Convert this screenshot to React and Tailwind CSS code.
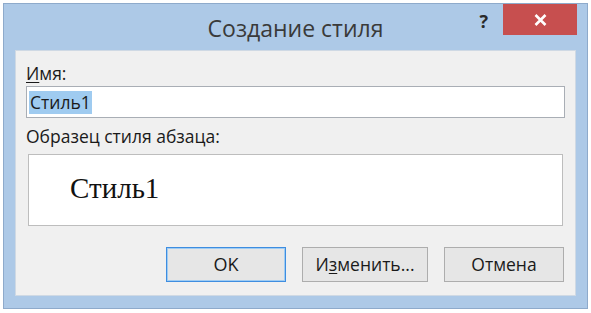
export default function App() {
  return (
    <div className="w-[591px] h-[313px] bg-white p-[3px] pb-[4px] font-['Open_Sans','Noto_Sans',sans-serif]">
      <div className="h-full flex flex-col bg-[#adc9e7] border border-[#8eaacb]">
        {/* Title bar */}
        <div className="h-[46px] flex items-start relative">
          <div className="flex-1 pt-[8px] text-center text-[23px] leading-[32px] text-[#3a3a3a]">
            Создание стиля
          </div>
          <div className="absolute right-[99px] top-[4px] text-[18px] font-bold text-[#2a2a2a]">?</div>
          <div className="absolute right-[10px] top-0 w-[74px] h-[31px] bg-[#c74f4f] flex items-center justify-center">
            <svg width="13" height="12" viewBox="0 0 13 12">
              <path d="M1.5 1 L11.5 11 M11.5 1 L1.5 11" stroke="white" strokeWidth="2.6" />
            </svg>
          </div>
        </div>
        {/* Client area */}
        <div className="flex-1 mx-[11px] mb-[12px] bg-[#f0f0f0] border border-[#cfd9e4] px-[10px] pt-[11px] flex flex-col text-[17.5px] text-[#1a1a1a]">
          <div className="leading-[22px]">
            <span className="underline underline-offset-2">И</span>мя:
          </div>
          <div className="mt-[2px] h-[32px] bg-white border border-[#a9aeb5] flex items-center px-[2px]">
            <span className="bg-[#9fcbf0] px-[1px] leading-[23px]">Стиль1</span>
          </div>
          <div className="mt-[7px] leading-[22px]">Образец стиля абзаца:</div>
          <div className="mt-[7px] mx-[2px] h-[72px] bg-white border border-[#bdbdbd] flex items-center pl-[41px] pb-[2px]">
            <span className="font-['Liberation_Serif',serif] text-[29px] text-[#111]">Стиль1</span>
          </div>
          <div className="mt-[21px] flex justify-end gap-[16px] pr-[1px]">
            <button className="w-[120px] h-[35px] bg-[#e6e6e6] border border-[#3e8de0] shadow-[inset_0_0_0_1px_#9fccf3] text-[18px] text-[#1a1a1a]">
              OK
            </button>
            <button className="w-[126px] h-[35px] bg-[#e6e6e6] border border-[#adadad] text-[17.5px] text-[#1a1a1a]">
              И<span className="underline underline-offset-2">з</span>менить...
            </button>
            <button className="w-[120px] h-[35px] bg-[#e6e6e6] border border-[#adadad] text-[17.5px] text-[#1a1a1a]">
              Отмена
            </button>
          </div>
        </div>
      </div>
    </div>
  )
}
